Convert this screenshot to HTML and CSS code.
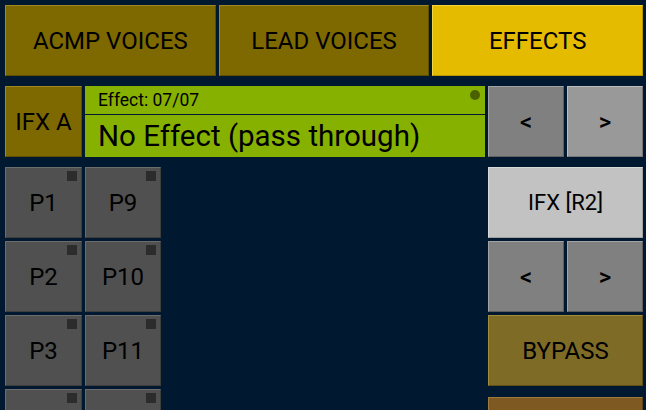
FILE: index.html
```html
<!DOCTYPE html>
<html>
<head>
<meta charset="utf-8">
<link rel="stylesheet" href="styles.css">
</head>
<body>
<div class="app">
  <nav class="tabs">
    <div class="btn gold">ACMP VOICES</div>
    <div class="btn gold">LEAD VOICES</div>
    <div class="btn yellow">EFFECTS</div>
  </nav>
  <div class="fxrow">
    <div class="btn gold">IFX A</div>
    <div class="display">
      <div class="disp-top">Effect: 07/07<span class="dot"></span></div>
      <div class="disp-main">No Effect (pass through)</div>
    </div>
    <div class="btn grey arrow">&lt;</div>
    <div class="btn grey-light arrow">&gt;</div>
  </div>
  <div class="lower">
    <div class="pads">
      <div class="btn pad">P1<span class="led"></span></div>
      <div class="btn pad">P9<span class="led"></span></div>
      <div class="btn pad">P2<span class="led"></span></div>
      <div class="btn pad">P10<span class="led"></span></div>
      <div class="btn pad">P3<span class="led"></span></div>
      <div class="btn pad">P11<span class="led"></span></div>
      <div class="btn pad"><span class="led"></span></div>
      <div class="btn pad"><span class="led"></span></div>
    </div>
    <div class="side">
      <div class="btn silver small">IFX [R2]</div>
      <div class="pair">
        <div class="btn grey arrow">&lt;</div>
        <div class="btn grey arrow">&gt;</div>
      </div>
      <div class="btn olive">BYPASS</div>
      <div class="btn brown extra"></div>
    </div>
  </div>
</div>
</body>
</html>
```

FILE: styles.css
```css
html, body {
  margin: 0;
  padding: 0;
  background: #011930;
  width: 646px;
  height: 410px;
  overflow: hidden;
}

.app {
  padding: 5px 3px 0 5px;
  font-family: Roboto, "Liberation Sans", sans-serif;
  color: #000;
}

.btn {
  box-sizing: border-box;
  display: flex;
  align-items: center;
  justify-content: center;
  height: 71px;
  font-size: 24px;
  border: 1px solid;
  white-space: nowrap;
  overflow: hidden;
}

.gold {
  background: #7e6900;
  border-color: #a08a1f #5e4f00 #5e4f00 #a08a1f;
}

.yellow {
  background: #e5bb00;
  border-color: #f5d33c #b89600 #b89600 #f5d33c;
}

.grey {
  background: #808080;
  border-color: #a2a2a2 #5f5f5f #5f5f5f #a2a2a2;
}

.grey-light {
  background: #999999;
  border-color: #bdbdbd #777777 #777777 #bdbdbd;
}

.silver {
  background: #c2c2c2;
  border-color: #d8d8d8 #a0a0a0 #a0a0a0 #d8d8d8;
}

.olive {
  background: #7e6b26;
  border-color: #a08c3a #5e4f18 #5e4f18 #a08c3a;
}

.brown {
  background: #7e5a22;
  border-color: #a07a3a #5e4218 #5e4218 #a07a3a;
}

.tabs {
  display: flex;
  gap: 3px;
}

.tabs .btn {
  flex: 1 1 0;
}

.fxrow {
  margin-top: 10px;
  display: grid;
  grid-template-columns: 77px 400px 76px 76px;
  gap: 3px;
}

.display {
  display: flex;
  flex-direction: column;
  gap: 1px;
  height: 71px;
}

.disp-top {
  position: relative;
  height: 28px;
  background: #87b100;
  font-size: 17.5px;
  line-height: 28px;
  padding-left: 13px;
}

.dot {
  position: absolute;
  top: 4px;
  right: 5px;
  width: 10px;
  height: 10px;
  border-radius: 50%;
  background: #4b6100;
}

.disp-main {
  height: 42px;
  background: #87b100;
  font-size: 29.5px;
  line-height: 42px;
  padding-left: 13px;
  white-space: nowrap;
}

.arrow {
  font-weight: 500;
}

.lower {
  margin-top: 10px;
  display: flex;
  justify-content: space-between;
}

.pads {
  display: grid;
  grid-template-columns: 77px 76px;
  grid-auto-rows: 71px;
  gap: 3px;
}

.pad {
  position: relative;
  background: #505050;
  border-color: #6c6c6c #3e3e3e #3e3e3e #6c6c6c;
}

.led {
  position: absolute;
  top: 3px;
  right: 4px;
  width: 10px;
  height: 10px;
  background: #2c2c2c;
}

.side {
  width: 155px;
  display: flex;
  flex-direction: column;
  gap: 3px;
}

.small {
  font-size: 22px;
}

.pair {
  display: flex;
  gap: 3px;
}

.pair .btn {
  flex: 1 1 0;
}

.extra {
  margin-top: 8px;
}
```
